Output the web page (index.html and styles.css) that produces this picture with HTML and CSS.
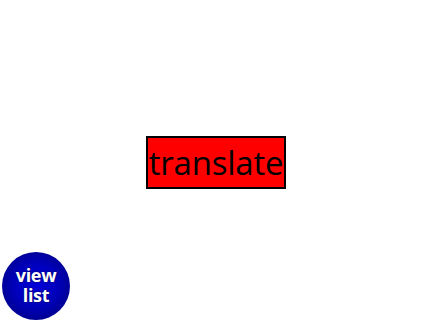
FILE: index.html
```html
<!DOCTYPE html>
<html lang="en">
<head>
    <meta charset="UTF-8">
    <title>translate</title>
    <link rel="stylesheet" href="styles.css">
</head>
<body>
    <div class="stage">
        <div class="word">translate</div>
    </div>
    <button class="view-list">view<br>list</button>
</body>
</html>
```

FILE: styles.css
```css
* {
    margin: 0;
    padding: 0;
    box-sizing: border-box;
}

body {
    width: 432px;
    height: 324px;
    background-color: #fff;
    font-family: 'Open Sans', sans-serif;
    overflow: hidden;
}

.stage {
    display: flex;
    justify-content: center;
    align-items: center;
    height: 324px;
}

.word {
    background-color: #f00;
    border: 2px solid #000;
    color: #000;
    font-size: 33px;
    line-height: 49px;
    width: 140px;
    text-align: center;
    letter-spacing: -0.2px;
    white-space: nowrap;
}

.view-list {
    position: absolute;
    left: 2px;
    top: 252px;
    width: 68px;
    height: 68px;
    padding-bottom: 3px;
    border: none;
    border-radius: 50%;
    background: radial-gradient(circle at 50% 48%, #0000d8 0%, #0000c0 40%, #00008a 80%, #000060 100%);
    color: #fff;
    font-family: 'Open Sans', sans-serif;
    font-weight: bold;
    font-size: 18px;
    line-height: 20px;
    letter-spacing: -0.3px;
    text-shadow: 0 0 2px rgba(0, 0, 0, 0.7);
}
```
